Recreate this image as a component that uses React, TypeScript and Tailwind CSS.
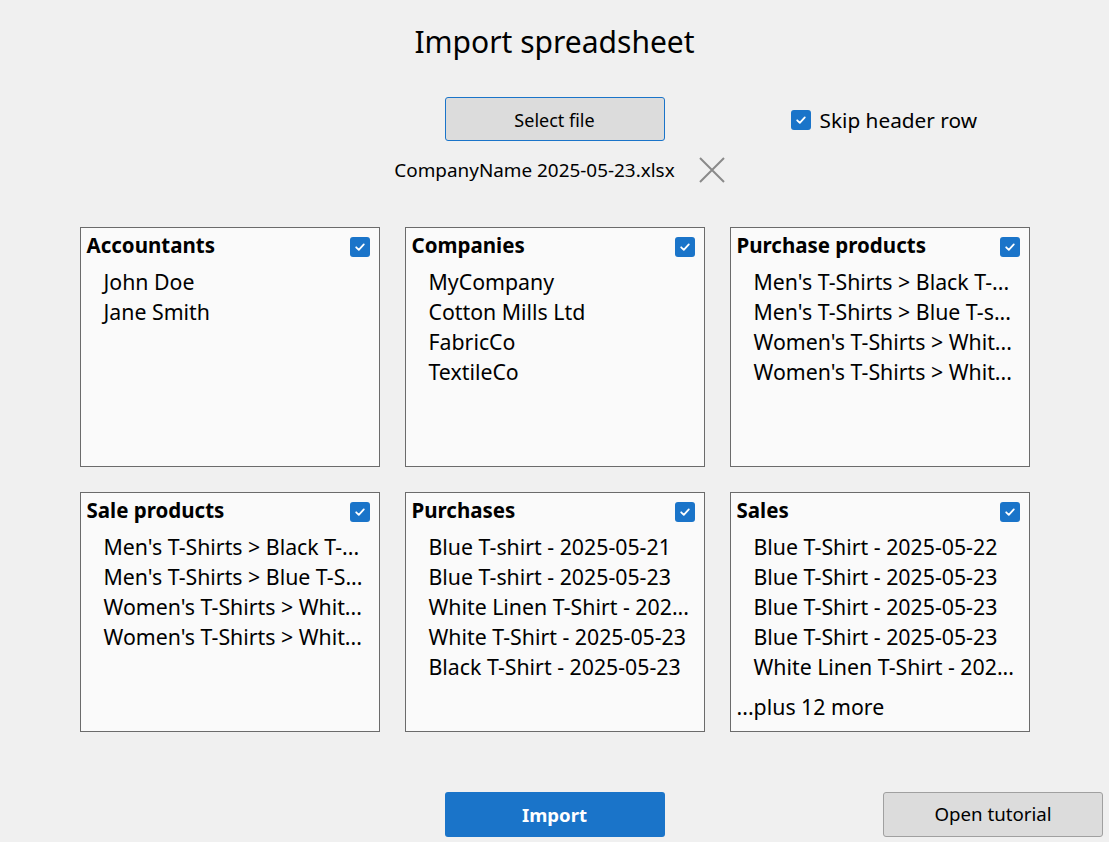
import React from "react";

const font = { fontFamily: '"Noto Sans", "Open Sans", sans-serif' };

function Check({ className = "" }: { className?: string }) {
  return (
    <div className={"w-[20px] h-[20px] rounded-[3px] bg-[#1a74c9] flex items-center justify-center " + className}>
      <svg width="12" height="12" viewBox="0 0 12 12">
        <path d="M2.2 6.3 L4.8 8.8 L9.8 3.4" stroke="white" strokeWidth="1.8" fill="none" strokeLinecap="round" strokeLinejoin="round" />
      </svg>
    </div>
  );
}

type CardProps = { title: string; items: string[]; more?: string };

function Card({ title, items, more }: CardProps) {
  return (
    <div className="h-[240px] w-[300px] border border-[#6b6b6b] bg-[#fafafa] flex flex-col overflow-hidden">
      <div className="flex items-start justify-between pl-[6px] pr-[9px] pt-[2px]">
        <div className="text-[20.5px] font-bold leading-[30px] text-black">{title}</div>
        <Check className="mt-[7px]" />
      </div>
      <div className="pl-[23px] pr-[4px] pt-[7px] flex flex-col">
        {items.map((it, i) => (
          <div key={i} className="text-[21.3px] leading-[30px] text-black whitespace-nowrap">
            {it}
          </div>
        ))}
      </div>
      {more && <div className="pl-[6px] pt-[10px] text-[21.3px] leading-[30px] text-black">{more}</div>}
    </div>
  );
}

export default function App() {
  const cards: CardProps[] = [
    { title: "Accountants", items: ["John Doe", "Jane Smith"] },
    { title: "Companies", items: ["MyCompany", "Cotton Mills Ltd", "FabricCo", "TextileCo"] },
    {
      title: "Purchase products",
      items: ["Men's T-Shirts > Black T-...", "Men's T-Shirts > Blue T-s...", "Women's T-Shirts > Whit...", "Women's T-Shirts > Whit..."],
    },
    {
      title: "Sale products",
      items: ["Men's T-Shirts > Black T-...", "Men's T-Shirts > Blue T-S...", "Women's T-Shirts > Whit...", "Women's T-Shirts > Whit..."],
    },
    {
      title: "Purchases",
      items: ["Blue T-shirt - 2025-05-21", "Blue T-shirt - 2025-05-23", "White Linen T-Shirt - 202...", "White T-Shirt - 2025-05-23", "Black T-Shirt - 2025-05-23"],
    },
    {
      title: "Sales",
      items: ["Blue T-Shirt - 2025-05-22", "Blue T-Shirt - 2025-05-23", "Blue T-Shirt - 2025-05-23", "Blue T-Shirt - 2025-05-23", "White Linen T-Shirt - 202..."],
      more: "...plus 12 more",
    },
  ];

  return (
    <div className="w-[1109px] h-[842px] bg-[#f0f0f0] flex flex-col text-black overflow-hidden" style={font}>
      <div className="mt-[22px] h-[40px] flex items-center justify-center text-[30px] leading-[40px]">Import spreadsheet</div>

      <div className="mt-[35px] grid grid-cols-[1fr_220px_1fr] items-center">
        <div />
        <button className="h-[44px] w-[220px] rounded-[3px] border border-[#1a74c9] bg-[#dcdcdc] text-[18px] text-black pt-[3px]">
          Select file
        </button>
        <div className="flex items-center pl-[126px] gap-[9px] pt-[2px]">
          <Check />
          <span className="text-[20.8px] leading-[28px]">Skip header row</span>
        </div>
      </div>

      <div className="mt-[16px] h-[26px] flex items-center justify-center gap-[24px] pl-[10px]">
        <span className="text-[18.9px] leading-[26px]">CompanyName 2025-05-23.xlsx</span>
        <svg width="26" height="26" viewBox="0 0 26 26">
          <path d="M1 1 L25 25 M25 1 L1 25" stroke="#8a8a8a" strokeWidth="2" />
        </svg>
      </div>

      <div className="mt-[44px] grid grid-cols-[300px_300px_300px] gap-x-[25px] gap-y-[25px] justify-center">
        {cards.map((c, i) => (
          <Card key={i} {...c} />
        ))}
      </div>

      <div className="mt-[60px] grid grid-cols-[1fr_220px_1fr] items-center">
        <div />
        <button className="h-[45px] w-[220px] rounded-[3px] bg-[#1a74c9] text-white text-[18.6px] font-bold">Import</button>
        <div className="flex justify-end pr-[6px]">
          <button className="h-[45px] w-[220px] rounded-[3px] border border-[#a0a0a0] bg-[#dcdcdc] text-[18.7px] text-black">
            Open tutorial
          </button>
        </div>
      </div>
    </div>
  );
}
